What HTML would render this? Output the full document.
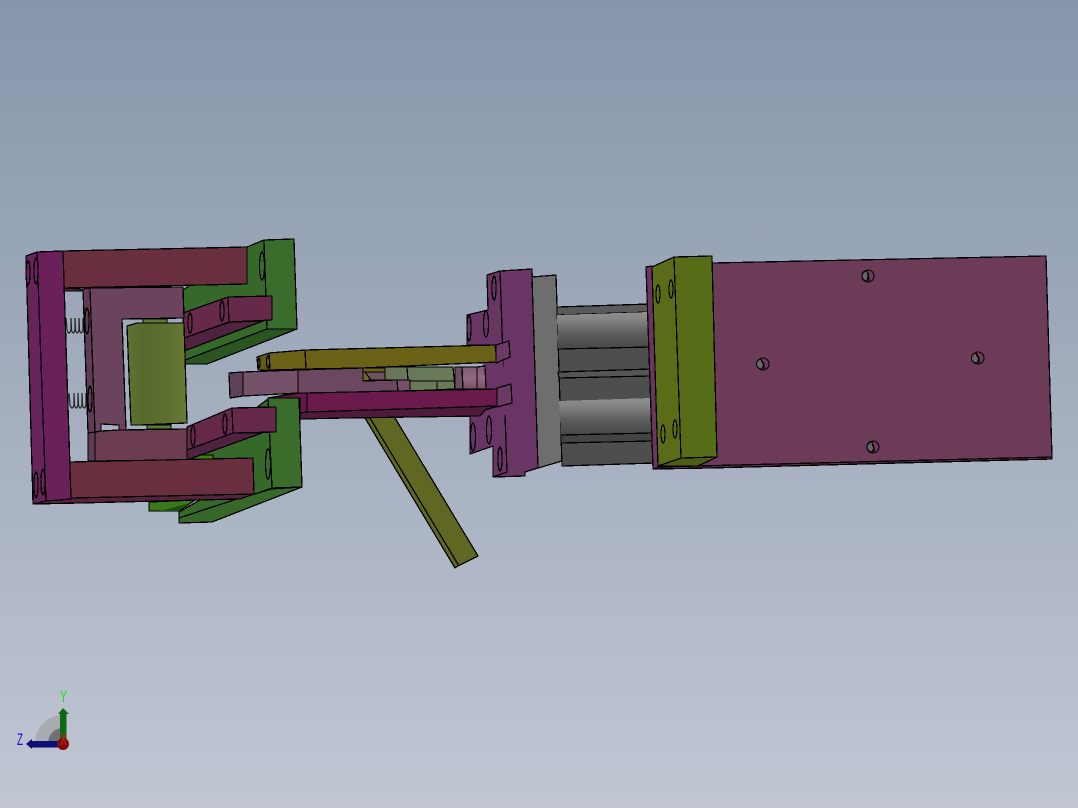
<!DOCTYPE html>
<html><head><meta charset="utf-8"><style>
html,body{margin:0;padding:0;width:1078px;height:808px;overflow:hidden}
body{background:linear-gradient(180deg,#8696ab 0%,#c1c6d2 100%)}
svg{display:block;position:absolute;left:0;top:0}
.e polygon,.e ellipse,.e line{stroke:#000;stroke-width:1.25;stroke-linejoin:round}
text{font-family:"Liberation Sans",sans-serif}
</style></head><body>
<svg width="1078" height="808" viewBox="0 0 1078 808" xmlns="http://www.w3.org/2000/svg">
<defs>
<linearGradient id="rol" x1="0" y1="0" x2="1" y2="0"><stop offset="0" stop-color="#5f7232"/><stop offset=".3" stop-color="#556a2c"/><stop offset=".7" stop-color="#5e7030"/><stop offset="1" stop-color="#687a33"/></linearGradient>
<linearGradient id="cyl" x1="0" y1="0" x2="0" y2="1"><stop offset="0" stop-color="#8f8f8f"/><stop offset=".2" stop-color="#858585"/><stop offset=".6" stop-color="#5c5c5c"/><stop offset="1" stop-color="#474747"/></linearGradient>
<linearGradient id="pink" x1="0" y1="0" x2="0" y2="1"><stop offset="0" stop-color="#7d5870"/><stop offset=".5" stop-color="#946a80"/><stop offset="1" stop-color="#7a5068"/></linearGradient>
<linearGradient id="grn" x1="0" y1="0" x2="1" y2="0"><stop offset="0" stop-color="#6c6e58"/><stop offset=".12" stop-color="#66785a"/><stop offset="1" stop-color="#6b7b58"/></linearGradient>
</defs>
<!-- springs -->
<g fill="none" stroke="#222" stroke-width="1.2">
<path d="M66 318L67 330Q69 336 71 330L71 318L71.500 330Q73 336 75 330L75 318L75.500 330Q77 336 79 330L79 318L79.500 330Q81 336 83 330L83 318L84 332Q86 335 88 331"/>
<path d="M69 393L70 405Q72 411 74 405L74 393L74.500 405Q76 411 78 405L78 393L78.500 405Q80 411 82 405L82 393L82.500 405Q84 411 86 405L86 393L87 407Q89 410 91 406"/>
</g>
<g class="e" shape-rendering="crispEdges">
<!-- upper green block -->
<polygon fill="#2a5520" points="185,360 267,329 297,329 207,364 185,364"/>
<polygon fill="#356829" points="247,247 264,240 267,329 185,360 183,290"/>
<polygon fill="#3a6c2c" points="264,240 294,239 297,329 267,329"/>
<ellipse cx="262" cy="266" rx="2.5" ry="14" fill="#356829"/>
<!-- upper small bar -->
<polygon fill="#4f2340" points="184,338 230,322 263,321 184,351"/>
<polygon fill="#66294a" points="183,313 228,297 229,322 184,338"/>
<polygon fill="#66294a" points="228,297 272,296 272,320 229,322"/>
<ellipse cx="222" cy="311" rx="2" ry="10" fill="#66294a"/>
<ellipse cx="190" cy="323" rx="2" ry="10" fill="#66294a"/>
<!-- lower green -->
<polygon fill="#3a7a18" points="149,502 195,500 179,511 149,511"/>
<polygon fill="#1f4f10" points="160,511 190,503 179,511" style="stroke:none"/>
<polygon fill="#37682a" points="179,512 200,500 255,494 271,489 302,487 212,522 179,523"/>
<line x1="179" y1="518" x2="255" y2="493"/>
<polygon fill="#356829" points="187,460 268,399 272,488 255,494 187,500"/>
<polygon fill="#3a6c2c" points="268,398 299,397 302,487 272,488"/>
<polygon fill="#3f7f18" points="187,455 213,455 213,460 187,460"/>
<ellipse cx="268" cy="464" rx="2.5" ry="15" fill="#356829"/>
<!-- lower small bar -->
<polygon fill="#4f2340" points="187,450 233,433 262,433 187,460"/>
<polygon fill="#66294a" points="187,427 232,408 233,433 187,450"/>
<polygon fill="#66294a" points="232,408 276,407 276,432 233,433"/>
<ellipse cx="225" cy="424" rx="2" ry="10" fill="#66294a"/>
<ellipse cx="193" cy="436" rx="2" ry="10" fill="#66294a"/>
<!-- slider body -->
<polygon fill="#5f3b54" points="83,289 90,288 95,432 88,433"/>
<polygon fill="#5f3b54" points="88,433 95,432 95,461 88,461"/>
<polygon fill="#6b435c" points="90,288 183,287 184,318 122,319 126,430 119,430 119,425 101,424 101,431 95,432"/>
<polygon fill="#6b3c50" points="95,432 101,431 119,430 187,429 187,460 95,461"/>
<ellipse cx="87" cy="321" rx="2" ry="13" fill="#5f3b54"/>
<ellipse cx="90" cy="399" rx="2" ry="13" fill="#5f3b54"/>
<!-- roller -->
<polygon fill="#5d7a35" points="143,319 167,319 167,324 143,324"/>
<polygon fill="#5d7a35" points="147,425 171,425 171,429 147,429"/>
<polygon fill="url(#rol)" points="127,326 137,323 184,323 187,423 140,425 131,425"/>
<!-- main red bars -->
<polygon fill="#55243a" points="63,288 83,289 83,291 63,291"/>
<polygon fill="#6a2f3f" points="63,251 247,247 247,284 63,288"/>
<polygon fill="#55243a" points="46,501 71,498 254,494 240,499 80,503 33,504"/>
<polygon fill="#6a2f3f" points="69,462 253,458 254,494 71,498"/>
<!-- left plate -->
<polygon fill="#66245a" points="26,256 37,252 46,501 33,504"/>
<polygon fill="#6a2059" points="37,252 63,251 71,499 46,501"/>
<ellipse cx="28" cy="273" rx="2" ry="12" fill="#66245a"/>
<ellipse cx="36" cy="271" rx="2" ry="13" fill="#66245a"/>
<ellipse cx="36" cy="485" rx="2" ry="13" fill="#66245a"/>
<ellipse cx="43" cy="482" rx="2" ry="13" fill="#66245a"/>
<!-- diagonal stick -->
<polygon fill="#5f6722" points="362,413 392,413 478,556 458,566 455,568"/>
<line x1="367" y1="413" x2="459" y2="566"/>
<!-- purple plate -->
<polygon fill="#693565" points="487,275 500,271 507,472 493,477 493,446 470,454 470,415 484,412 484,345 467,345 467,315 488,310"/>
<polygon fill="#693565" points="500,271 532,269 538,468 525,472 525,476 493,477 507,472"/>
<polygon fill="#693565" style="stroke:none" points="484,345 502,340 507,415 484,413"/>
<ellipse cx="494" cy="288" rx="2" ry="12" fill="#693565"/>
<ellipse cx="486" cy="324" rx="2.5" ry="13" fill="#693565"/>
<ellipse cx="469" cy="328" rx="2" ry="13" fill="#693565"/>
<ellipse cx="489" cy="430" rx="2.5" ry="14" fill="#693565"/>
<ellipse cx="473" cy="437" rx="2.5" ry="14" fill="#693565"/>
<ellipse cx="500" cy="459" rx="2" ry="12" fill="#693565"/>
<!-- bottom dark under magenta -->
<polygon fill="#4f1a3c" points="300,413 300,419 345,418 480,416 485,410 498,406 307,412"/>
<polygon fill="#5f1a45" points="268,398 298,393 307,393 307,412 300,413 300,398"/>
<!-- olive -->
<polygon fill="#6b6217" points="305,350 495,345 497,362 362,368 306,369"/>
<polygon fill="#6b6217" points="269,353 305,350 306,369 270,370"/>
<polygon fill="#635a15" points="257,357 269,353 270,370 258,370"/>
<ellipse cx="268" cy="362" rx="1.500" ry="6" fill="#635a15"/>
<ellipse cx="259" cy="363" rx="1" ry="5" fill="#635a15"/>
<!-- middle -->
<polygon fill="#6a6520" points="363,368 385,368 385,372 363,372"/>
<polygon fill="#6f5262" points="365,372 385,372 385,380 371,380"/>
<polygon fill="#6a6d2a" points="363,372 365,372 371,380 363,381"/>
<polygon fill="url(#grn)" points="385,367 453,367 455,389 410,391 410,380 385,380"/>
<line x1="407" y1="367" x2="408" y2="380"/>
<line x1="410" y1="381" x2="455" y2="381"/>
<line x1="437" y1="382" x2="437" y2="390"/>
<polygon fill="#6f4b62" points="455,367 462,367 463,389 455,389"/>
<polygon fill="url(#pink)" points="462,367 477,367 477,389 463,389"/>
<polygon fill="url(#pink)" points="477,367 485,366 486,389 477,389"/>
<!-- mauve bar -->
<polygon fill="#5e4058" points="229,373 243,372 243,396 230,398"/>
<polygon fill="#74536a" points="243,372 298,370 298,393 243,396"/>
<polygon fill="#6c4760" points="298,370 363,368 363,381 397,380 398,392 298,393"/>
<polygon fill="#74506a" points="397,380 410,380 410,391 398,392"/>
<!-- magenta bar -->
<polygon fill="#6b1a4c" points="307,393 398,391 497,389 498,406 307,412"/>
<polygon fill="#6c3a64" points="496,345 509,341 510,357 496,363"/>
<polygon fill="#6c3a64" points="497,388 511,384 512,403 497,407"/>
<!-- gray plate -->
<polygon fill="#6e6e6e" points="532,277 556,275 562,461 538,468"/>
<!-- cylinders -->
<polygon fill="#4e4e4e" points="557,307 650,304 655,463 562,466"/>
<polygon fill="#5a5a5a" points="557,307 650,304 650,312 557,315"/>
<polygon fill="url(#cyl)" style="stroke:none" points="557,315 650,312 651,347 558,349"/>
<line x1="558" y1="349" x2="651" y2="347"/>
<polygon fill="#555" points="558,372 651,369 651,376 559,378"/>
<polygon fill="url(#cyl)" style="stroke:none" points="559,401 652,398 653,433 561,435"/>
<line x1="561" y1="435" x2="653" y2="433"/>
<polygon fill="#444" points="561,435 653,433 653,441 561,443"/>
<!-- back plate -->
<polygon fill="#5a2d48" points="653,469 710,468 1052,459 1052,457 697,466 659,467"/>
<polygon fill="#6b3b57" points="712,263 1046,256 1052,457 697,466"/>
<!-- olive plate -->
<polygon fill="#6a3560" points="646,267 652,266 659,467 653,469"/>
<polygon fill="#4b5e14" points="658,466 681,458 717,457 698,466"/>
<polygon fill="#5a6c17" points="652,267 674,257 681,458 658,466"/>
<polygon fill="#566c17" points="674,257 712,256 717,457 681,458"/>
<ellipse cx="658" cy="294" rx="2" ry="9" fill="#5a6c17"/>
<ellipse cx="671" cy="289" rx="2" ry="9" fill="#5a6c17"/>
<ellipse cx="663" cy="434" rx="2" ry="9" fill="#5a6c17"/>
<ellipse cx="675" cy="429" rx="2" ry="9" fill="#5a6c17"/>
</g>
<!-- bolt holes -->
<g stroke="#000" fill="none">
<g transform="translate(868,276)"><circle r="6" fill="#6b3b57"/><path d="M-1 -5A5 5 0 0 0 -1 5L0 0Z" fill="#666"/><path d="M0 -3L1 5" stroke-width="1.2"/></g>
<g transform="translate(763,364)"><circle r="6" fill="#6b3b57"/><path d="M-2 -5A5 5 0 0 0 -1 5L1 0Z" fill="#666"/><path d="M-2 -4L1 1L1 5" stroke-width="1.2"/></g>
<g transform="translate(978,358)"><circle r="6" fill="#6b3b57"/><path d="M-2 -5A5 5 0 0 0 -1 5L1 0Z" fill="#666"/><path d="M-2 -4L1 1L1 5" stroke-width="1.2"/></g>
<g transform="translate(873,447)"><circle r="6" fill="#6b3b57"/><path d="M-1 -5A5 5 0 0 0 -1 5L1 1Z" fill="#666"/><path d="M-1 -3L1 1L1 5" stroke-width="1.2"/></g>
</g>
<!-- triad -->
<path d="M63 743L35 743A28 28 0 0 1 63 715Z" fill="#a9abb2"/>
<path d="M63 743L48 743A15 15 0 0 1 63 728Z" fill="#6f7177"/>
<rect x="60" y="713" width="6.500" height="29" fill="#0b6a12"/>
<polygon points="63,708 69,714 58,714" fill="#0b6a12"/>
<rect x="32" y="741" width="29" height="6.500" fill="#0e0e78"/>
<polygon points="26,744 32,739 32,749" fill="#0e0e78"/>
<circle cx="63" cy="744" r="6" fill="#7a0d0d"/>
<text x="60" y="745" font-size="17" fill="#ee1111" textLength="7" lengthAdjust="spacingAndGlyphs">X</text>
<text x="60" y="702" font-size="16.5" fill="#22dd22" textLength="7" lengthAdjust="spacingAndGlyphs">Y</text>
<text x="17" y="745" font-size="17" fill="#1111ee" textLength="6" lengthAdjust="spacingAndGlyphs">Z</text>
</svg>
</body></html>
